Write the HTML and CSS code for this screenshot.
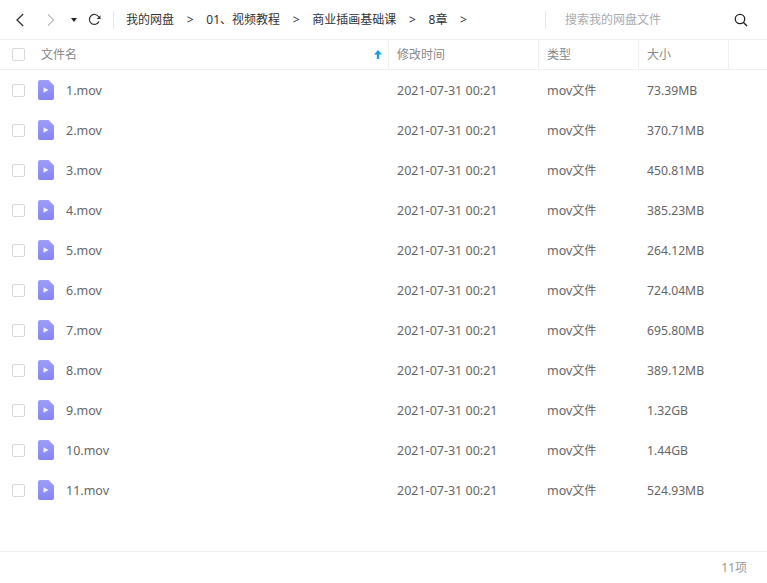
FILE: index.html
```html
<!DOCTYPE html>
<html lang="zh">
<head>
<meta charset="utf-8">
<title>8章</title>
<link rel="stylesheet" href="styles.css">
</head>
<body>
<div class="app">
  <header class="toolbar">
    <svg class="ico back" width="12" height="16" viewBox="0 0 12 16"><path d="M9.200 2 3 8l6.200 6" fill="none" stroke="#333" stroke-width="1.300"/></svg>
    <svg class="ico forward" width="12" height="16" viewBox="0 0 12 16"><path d="M3 2.500 8.700 8 3 13.500" fill="none" stroke="#bbb" stroke-width="1.100"/></svg>
    <svg class="ico caret" width="6" height="4" viewBox="0 0 6 4"><path d="M0 0h6L3 4z" fill="#222"/></svg>
    <svg class="ico refresh" width="14" height="14" viewBox="0 0 14 14"><path d="M11.800 4A5 5 0 1 0 12 8.500" fill="none" stroke="#333" stroke-width="1.200"/><path d="M13.500 2.200v3.800H9.700z" fill="#333"/></svg>
    <span class="vline"></span>
    <nav class="crumbs">
      <span>我的网盘</span><b>&gt;</b>
      <span>01、视频教程</span><b>&gt;</b>
      <span>商业插画基础课</span><b>&gt;</b>
      <span>8章</span><b>&gt;</b>
    </nav>
    <span class="vline search-line"></span>
    <span class="search">搜索我的网盘文件</span>
    <svg class="ico lens" width="14" height="14" viewBox="0 0 14 14"><circle cx="6" cy="6" r="4.700" fill="none" stroke="#222" stroke-width="1.300"/><path d="m9.500 9.500 3.500 3.500" stroke="#222" stroke-width="1.400"/></svg>
  </header>

  <div class="thead">
    <div class="c-check"><span class="box"></span></div>
    <div class="c-name th">文件名
      <svg class="sort" width="8" height="9" viewBox="0 0 8 9"><path d="M4 0 8 4.500H5.200V9H2.800V4.500H0z" fill="#1c9fe0"/></svg>
    </div>
    <div class="c-time th">修改时间</div>
    <div class="c-type th">类型</div>
    <div class="c-size th">大小</div>
    <div class="c-rest th"></div>
  </div>

  <main class="tbody">
    <div class="row"><div class="c-check"><span class="box"></span></div><div class="c-name"><svg class="file" viewBox="0 0 16 20"><use href="#movicon"/></svg><span class="fname">1.mov</span></div><div class="c-time">2021-07-31 00:21</div><div class="c-type">mov<span class="cjk">文件</span></div><div class="c-size">73.39MB</div></div>
    <div class="row"><div class="c-check"><span class="box"></span></div><div class="c-name"><svg class="file" viewBox="0 0 16 20"><use href="#movicon"/></svg><span class="fname">2.mov</span></div><div class="c-time">2021-07-31 00:21</div><div class="c-type">mov<span class="cjk">文件</span></div><div class="c-size">370.71MB</div></div>
    <div class="row"><div class="c-check"><span class="box"></span></div><div class="c-name"><svg class="file" viewBox="0 0 16 20"><use href="#movicon"/></svg><span class="fname">3.mov</span></div><div class="c-time">2021-07-31 00:21</div><div class="c-type">mov<span class="cjk">文件</span></div><div class="c-size">450.81MB</div></div>
    <div class="row"><div class="c-check"><span class="box"></span></div><div class="c-name"><svg class="file" viewBox="0 0 16 20"><use href="#movicon"/></svg><span class="fname">4.mov</span></div><div class="c-time">2021-07-31 00:21</div><div class="c-type">mov<span class="cjk">文件</span></div><div class="c-size">385.23MB</div></div>
    <div class="row"><div class="c-check"><span class="box"></span></div><div class="c-name"><svg class="file" viewBox="0 0 16 20"><use href="#movicon"/></svg><span class="fname">5.mov</span></div><div class="c-time">2021-07-31 00:21</div><div class="c-type">mov<span class="cjk">文件</span></div><div class="c-size">264.12MB</div></div>
    <div class="row"><div class="c-check"><span class="box"></span></div><div class="c-name"><svg class="file" viewBox="0 0 16 20"><use href="#movicon"/></svg><span class="fname">6.mov</span></div><div class="c-time">2021-07-31 00:21</div><div class="c-type">mov<span class="cjk">文件</span></div><div class="c-size">724.04MB</div></div>
    <div class="row"><div class="c-check"><span class="box"></span></div><div class="c-name"><svg class="file" viewBox="0 0 16 20"><use href="#movicon"/></svg><span class="fname">7.mov</span></div><div class="c-time">2021-07-31 00:21</div><div class="c-type">mov<span class="cjk">文件</span></div><div class="c-size">695.80MB</div></div>
    <div class="row"><div class="c-check"><span class="box"></span></div><div class="c-name"><svg class="file" viewBox="0 0 16 20"><use href="#movicon"/></svg><span class="fname">8.mov</span></div><div class="c-time">2021-07-31 00:21</div><div class="c-type">mov<span class="cjk">文件</span></div><div class="c-size">389.12MB</div></div>
    <div class="row"><div class="c-check"><span class="box"></span></div><div class="c-name"><svg class="file" viewBox="0 0 16 20"><use href="#movicon"/></svg><span class="fname">9.mov</span></div><div class="c-time">2021-07-31 00:21</div><div class="c-type">mov<span class="cjk">文件</span></div><div class="c-size">1.32GB</div></div>
    <div class="row"><div class="c-check"><span class="box"></span></div><div class="c-name"><svg class="file" viewBox="0 0 16 20"><use href="#movicon"/></svg><span class="fname">10.mov</span></div><div class="c-time">2021-07-31 00:21</div><div class="c-type">mov<span class="cjk">文件</span></div><div class="c-size">1.44GB</div></div>
    <div class="row"><div class="c-check"><span class="box"></span></div><div class="c-name"><svg class="file" viewBox="0 0 16 20"><use href="#movicon"/></svg><span class="fname">11.mov</span></div><div class="c-time">2021-07-31 00:21</div><div class="c-type">mov<span class="cjk">文件</span></div><div class="c-size">524.93MB</div></div>
  </main>

  <footer class="foot">11项</footer>
</div>
<svg width="0" height="0" class="defs">
  <defs>
    <linearGradient id="movgrad" x1="0" y1="0" x2="0" y2="1"><stop offset="0" stop-color="#9c9ef9"/><stop offset="1" stop-color="#8583f3"/></linearGradient>
    <symbol id="movicon" viewBox="0 0 16 20">
      <path d="M2 0h8.500L16 5.500V18a2 2 0 0 1-2 2H2a2 2 0 0 1-2-2V2a2 2 0 0 1 2-2z" fill="url(#movgrad)"/>
      <path d="M5.500 7.300v5.400L10.500 10z" fill="#f2f2ff"/>
    </symbol>
  </defs>
</svg>
</body>
</html>
```
FILE: styles.css
```css
* { box-sizing: border-box; }
html, body { margin: 0; padding: 0; background: #fff; }
body { font-family: "Noto Sans", "Noto Sans CJK SC", sans-serif; font-size: 12px; line-height: 18px; color: #666; }
.app { width: 767px; height: 583px; display: flex; flex-direction: column; overflow: hidden; }
.defs { position: absolute; }

.toolbar { height: 40px; flex: none; display: flex; align-items: center; border-bottom: 1px solid #f0f0f0; }
.ico { flex: none; display: block; }
.back { margin-left: 14px; }
.forward { margin-left: 19px; }
.caret { margin-left: 14px; }
.refresh { margin-left: 10px; }
.vline { width: 1px; height: 18px; background: #e6e6e6; margin-left: 12px; flex: none; }
.crumbs { display: flex; align-items: center; margin-left: 12px; color: #333; white-space: nowrap; width: 419px; }
.crumbs b { font-weight: 400; margin: 0 12.700px; color: #333; }
.search-line { margin-left: 0; }
.search { margin-left: 19px; color: #aaa; width: 169px; }
.lens { margin-left: 0; }

.thead { height: 30px; flex: none; display: flex; border-bottom: 1px solid #f0f0f0; color: #888; }
.th { display: flex; align-items: center; position: relative; height: 29px; }
.th.c-name { padding-left: 1px; }
.c-check { width: 40px; flex: none; display: flex; align-items: center; padding-left: 12px; }
.box { width: 13px; height: 13px; border: 1px solid #d8d8d8; border-radius: 2px; display: block; background: #fff; }
.c-name { width: 348px; flex: none; display: flex; align-items: center; }
.c-time { width: 150px; flex: none; padding-left: 8px; border-left: 1px solid transparent; }
.c-type { width: 100px; flex: none; padding-left: 8px; border-left: 1px solid transparent; }
.c-size { width: 90px; flex: none; padding-left: 8px; border-left: 1px solid transparent; }
.c-rest { width: 39px; flex: none; border-left: 1px solid #f0f0f0; }
.th.c-time, .th.c-type, .th.c-size { border-left-color: #f0f0f0; }
.sort { position: absolute; right: 6px; top: 10px; }

.tbody { flex: 1; }
.row { height: 40px; display: flex; align-items: center; font-size: 12.500px; }
.row .c-time, .row .c-type, .row .c-size, .fname { padding-top: 2px; }
.file { width: 16px; height: 20px; flex: none; margin-left: -2px; margin-right: 12px; }
.cjk { font-size: 12px; }
.row .c-size { font-size: 12.200px; }

.foot { height: 32px; flex: none; border-top: 1px solid #f0f0f0; display: flex; align-items: center; justify-content: flex-end; padding-right: 20px; color: #999; }
```
